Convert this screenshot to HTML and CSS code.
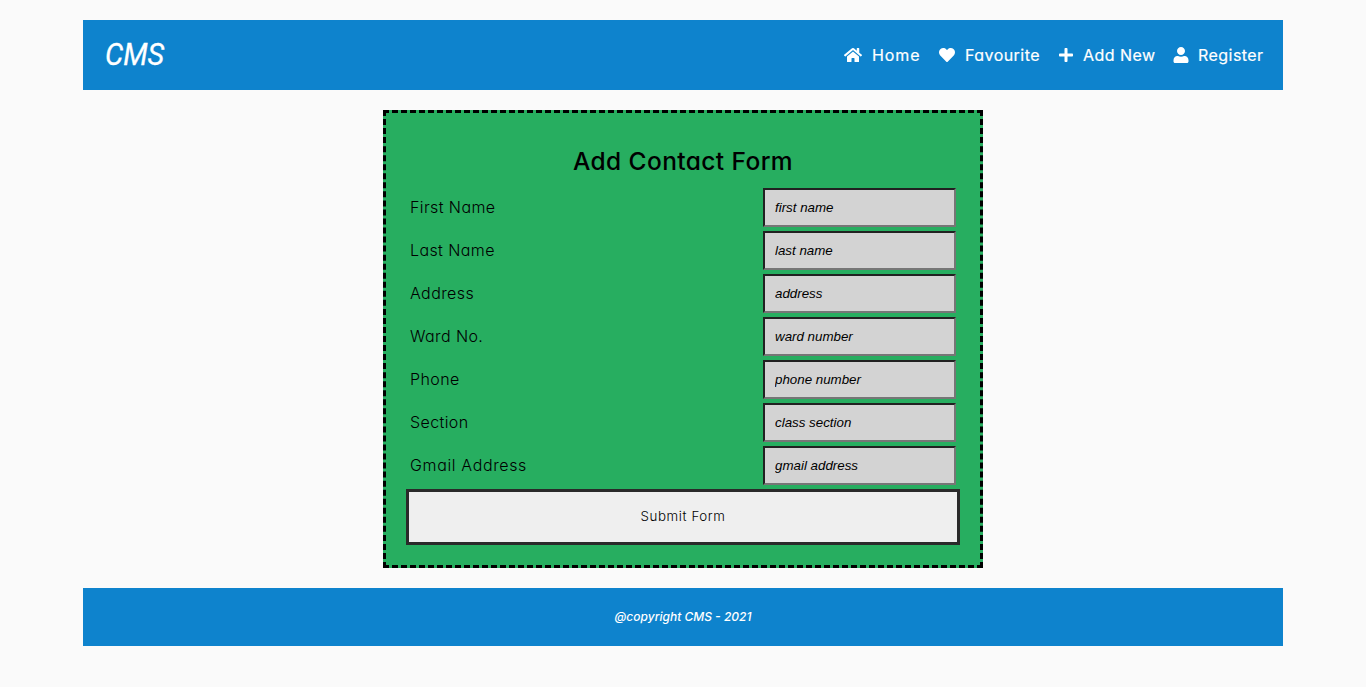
FILE: index.html
```html
<!DOCTYPE html>
<html lang="en">
<head>
<meta charset="utf-8">
<title>CMS</title>
<link rel="stylesheet" href="styles.css">
</head>
<body>
<div class="container">
  <header class="header">
    <div class="logo">CMS</div>
    <nav class="nav">
      <a class="link home"><svg class="icon" width="18" height="16" viewBox="0 0 576 512"><path d="M280.37 148.26L96 300.11V464a16 16 0 0 0 16 16l112.06-.29a16 16 0 0 0 15.92-16V368a16 16 0 0 1 16-16h64a16 16 0 0 1 16 16v95.64a16 16 0 0 0 16 16.05L464 480a16 16 0 0 0 16-16V300L295.67 148.26a12.19 12.19 0 0 0-15.3 0zM571.6 251.47L488 182.56V44.05a12 12 0 0 0-12-12h-56a12 12 0 0 0-12 12v72.61L318.47 43a48 48 0 0 0-61 0L4.34 251.47a12 12 0 0 0-1.6 16.9l25.5 31A12 12 0 0 0 45.15 301l235.22-193.74a12.19 12.19 0 0 1 15.3 0L530.9 301a12 12 0 0 0 16.9-1.6l25.5-31a12 12 0 0 0-1.7-16.93z"/></svg><span>Home</span></a>
      <a class="link favourite"><svg class="icon" width="16" height="16" viewBox="0 0 512 512"><path d="M462.3 62.6C407.5 15.9 326 24.3 275.7 76.2L256 96.5l-19.7-20.3C186.1 24.3 104.5 15.9 49.7 62.6c-62.8 53.6-66.1 149.8-9.9 207.9l193.5 199.8c12.5 12.9 32.8 12.9 45.3 0l193.5-199.8c56.3-58.1 53-154.3-9.8-207.9z"/></svg><span>Favourite</span></a>
      <a class="link add"><svg class="icon" width="14" height="16" viewBox="0 0 448 512"><path d="M416 208H272V64c0-17.67-14.33-32-32-32h-32c-17.67 0-32 14.33-32 32v144H32c-17.67 0-32 14.33-32 32v32c0 17.67 14.33 32 32 32h144v144c0 17.67 14.33 32 32 32h32c17.67 0 32-14.33 32-32V304h144c17.67 0 32-14.33 32-32v-32c0-17.67-14.33-32-32-32z"/></svg><span>Add New</span></a>
      <a class="link register"><svg class="icon" width="16" height="16" viewBox="0 0 512 512"><path d="M256 256c70.7 0 128-57.3 128-128S326.700 0 256 0 128 57.300 128 128s57.300 128 128 128zm115 30h-19c-29 14-62 22-96 22s-67-8-96-22h-19C70 286 16 348 16 422v42c0 26.500 21.500 48 48 48h384c26.500 0 48-21.500 48-48v-42c0-74-54-136-125-136z"/></svg><span>Register</span></a>
    </nav>
  </header>
  <form class="form">
    <h1 class="title">Add Contact Form</h1>
    <div class="row"><label class="label">First Name</label><input class="input" placeholder="first name"></div>
    <div class="row"><label class="label">Last Name</label><input class="input" placeholder="last name"></div>
    <div class="row"><label class="label">Address</label><input class="input" placeholder="address"></div>
    <div class="row"><label class="label">Ward No.</label><input class="input" placeholder="ward number"></div>
    <div class="row"><label class="label">Phone</label><input class="input" placeholder="phone number"></div>
    <div class="row"><label class="label">Section</label><input class="input" placeholder="class section"></div>
    <div class="row"><label class="label wide">Gmail Address</label><input class="input" placeholder="gmail address"></div>
    <button class="submit" type="button">Submit Form</button>
  </form>
  <footer class="footer">@copyright CMS - 2021</footer>
</div>
</body>
</html>
```

FILE: styles.css
```css
* { box-sizing: border-box; margin: 0; }
body {
  background: #fafafa;
  font-family: Inter, "Open Sans", sans-serif;
  font-feature-settings: "cv11";
}
.container { width: 1200px; margin: 20px auto 0; }
.header {
  display: flex;
  justify-content: space-between;
  align-items: center;
  height: 70px;
  padding: 0 20px 0 22px;
  background: #0e83cd;
  color: #fff;
}
.logo {
  font: italic 400 32px/38px Roboto, sans-serif;
  -webkit-text-stroke: .3px #fff;
  padding-bottom: 2px;
  transform: scaleX(.9);
  transform-origin: left;
}
.nav { display: flex; gap: 19px; }
.link { display: flex; align-items: center; gap: 10px; font-size: 16px; line-height: 24px; letter-spacing: .45px; white-space: nowrap; -webkit-text-stroke: .2px #fff; }
.link span { display: block; }
.home span { width: 48px; letter-spacing: .9px; }
.favourite span { width: 75px; }
.add span { width: 71px; }
.register { gap: 9px; }
.register span { width: 65px; }
.icon { display: block; fill: #fff; }
.form {
  width: 600px;
  height: 458px;
  margin: 20px auto;
  padding: 30px 20px 20px;
  border: 3px dashed #000;
  background: #27ae60;
}
.title {
  height: 45px;
  font-size: 24.5px;
  font-weight: 500;
  line-height: 36px;
  letter-spacing: .4px;
  text-align: center;
}
.row {
  display: flex;
  justify-content: space-between;
  align-items: center;
  height: 39px;
  margin-bottom: 4px;
  padding: 0 4px;
}
.label { padding-bottom: 2px; font-size: 16px; font-weight: 300; letter-spacing: .4px; }
.wide { letter-spacing: .64px; }
.input {
  width: 193px;
  height: 39px;
  padding: 10px;
  border: 2px inset #767676;
  background: #d3d3d3;
  font: 13.333px "Liberation Sans", Arial, sans-serif;
}
.input::placeholder { color: #000; font-style: italic; opacity: 1; }
.submit {
  display: block;
  width: 554px;
  height: 56px;
  padding: 0 0 2px;
  border: 3px solid #2a2a2a;
  background: #efefef;
  color: #000;
  font: 300 13.333px Inter, sans-serif;
  letter-spacing: .6px;
}
.footer {
  height: 58px;
  background: #0e83cd;
  color: #fff;
  font-size: 12px;
  font-style: italic;
  font-weight: 500;
  line-height: 58px;
  text-align: center;
}
```
